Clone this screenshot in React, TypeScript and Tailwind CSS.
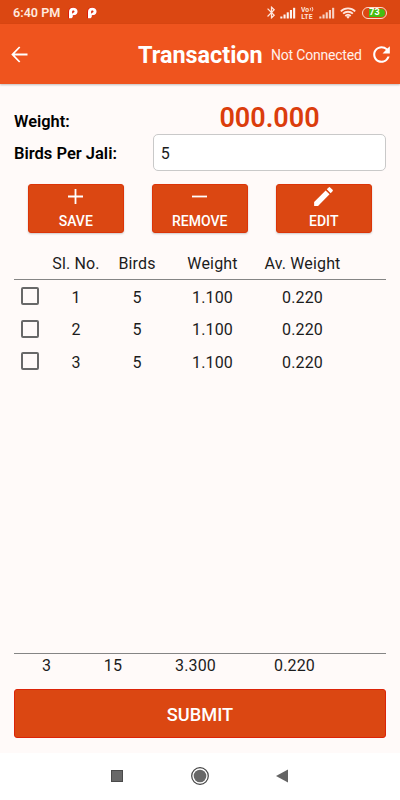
import type { ReactNode } from 'react';
import { MdBluetooth, MdEdit, MdRefresh } from 'react-icons/md';

const rows = [
  { id: 1, birds: 5, weight: '1.100', average: '0.220' },
  { id: 2, birds: 5, weight: '1.100', average: '0.220' },
  { id: 3, birds: 5, weight: '1.100', average: '0.220' },
];

function ParkingGlyph() {
  return (
    <svg width="10" height="12" viewBox="0 0 10 12">
      <path d="M.4 11.3V4.8C.4 2 2.1.5 5 .5c2.8 0 4.6 1.6 4.6 4S8 8.6 5.2 8.7v.7l-1.6 1.9Z" fill="#e00000" />
      <path d="M1 11.3V4.9C1 2.2 2.5.8 5.2.8 7.9.8 9.6 2.2 9.6 4.5S8 8.3 5.4 8.3H4.8v1.6l-1.2 1.4Z" fill="#fff" />
      <path d="M4.1 6.7V4.8c0-.8.5-1.2 1.2-1.2s1.2.4 1.2 1-.5 1.1-1.2 1.1Z" fill="#db2d10" />
    </svg>
  );
}

function Signal({ dim = false }: { dim?: boolean }) {
  return (
    <svg width="16" height="12" viewBox="0 0 16 12" fill="#fff" opacity={dim ? 0.75 : 0.95}>
      <rect x="0.3" y="9.5" width="2.1" height="2" />
      <rect x="3.5" y="7.5" width="2.1" height="4" />
      <rect x="6.7" y="5.3" width="2.1" height="6.2" />
      <rect x="9.9" y="3" width="2.1" height="8.5" />
      <rect x="13.1" y="0.8" width="2.1" height="10.7" />
    </svg>
  );
}

function Wifi() {
  return (
    <svg width="16" height="12" viewBox="0 0 16 12" fill="none" stroke="#ffe5dc" strokeWidth="1.8">
      <path d="M.8 4.3a10.4 10.4 0 0 1 14.4 0M3.1 6.7a7.1 7.1 0 0 1 9.8 0M5.3 9a4 4 0 0 1 5.4 0" />
      <path d="M6.2 9.7 8 11.7l1.8-2a2.7 2.7 0 0 0-3.6 0Z" fill="#ffe5dc" stroke="none" />
    </svg>
  );
}

function StatusBar() {
  return (
    <div className="flex h-6 shrink-0 items-center bg-[#db4712] pl-[13px] pr-[13px] text-white">
      <span className="w-[55px] whitespace-nowrap pt-[3px] text-[12.6px] font-semibold leading-none text-[#ffe9df]">
        6:40 PM
      </span>
      <div className="flex gap-[9px] pt-0.5">
        <ParkingGlyph />
        <ParkingGlyph />
      </div>
      <div className="ml-auto flex items-center pt-px">
        <MdBluetooth size={15} className="mr-px text-[#ffe5dc]" />
        <Signal />
        <svg width="13" height="13" viewBox="0 0 13 13" className="ml-[5px] mr-[5px]" fill="#ffe5dc">
          <text x="0" y="5.5" fontSize="6.8" fontWeight="700">Vo</text>
          <path d="M9.2 1.8q1 1.4 0 2.8M11 1q1.8 2.2 0 4.4" fill="none" stroke="#ffe5dc" strokeWidth="0.9" />
          <text x="0.2" y="12.5" fontSize="6.8" fontWeight="700" letterSpacing="0.2">LTE</text>
        </svg>
        <Signal dim />
        <div className="ml-[5px] mr-[6px]">
          <Wifi />
        </div>
        <div className="flex h-3 w-[25px] rounded-full border border-[#ffd9cc] p-px">
          <div className="flex h-2 w-full items-center justify-center rounded-full bg-[linear-gradient(90deg,#db4712_25%,#45bd12_25%)] text-[9px] font-bold leading-none">
            73
          </div>
        </div>
      </div>
    </div>
  );
}

function ActionButton({ icon, label }: { icon: ReactNode; label: string }) {
  return (
    <button className="flex h-[49px] w-[96.5px] flex-col items-center rounded-[3px] border border-[#dc3408] bg-[#db4712] text-white shadow-[0_1px_2px_rgba(0,0,0,0.2)]">
      <span className="flex h-[23px] shrink-0 items-center">{icon}</span>
      <span className="mt-0.5 shrink-0 text-[14px] font-medium leading-[23px]">{label}</span>
    </button>
  );
}

export default function App() {
  return (
    <div className="flex h-[800px] w-[400px] flex-col overflow-hidden bg-[#fffaf9] font-['Roboto',sans-serif] text-[#1c1c1c]">
      <StatusBar />
      <header className="flex h-[60px] shrink-0 items-center bg-[#ef541e] pl-[11px] pr-[6px] pt-px text-white shadow-[0_1px_2px_rgba(0,0,0,0.25)]">
        <svg width="17" height="17" viewBox="0 0 17 17" fill="none" stroke="#fff" strokeWidth="1.8">
          <path d="M8.7 1 1.5 8.5 8.7 16M1.3 8.5h15.2" />
        </svg>
        <h1 className="ml-[110px] w-[133px] whitespace-nowrap pt-[3px] text-[23.4px] font-bold leading-none">
          Transaction
        </h1>
        <span className="whitespace-nowrap pt-px text-[14px] leading-none tracking-[-0.2px] text-[#fff1eb]">
          Not Connected
        </span>
        <MdRefresh size={25} className="ml-auto" />
      </header>

      <main className="flex h-[669px] shrink-0 flex-col px-[14px]">
        <div className="mt-[18px] flex h-8 items-center">
          <span className="w-[139px] pt-[9px] text-[16.4px] font-semibold leading-none text-black">Weight:</span>
          <span className="w-[233px] pt-px text-center text-[27px] font-semibold leading-none text-[#db3d0c]">
            000.000
          </span>
        </div>
        <div className="flex h-[37px] items-center">
          <label className="w-[139px] whitespace-nowrap pt-[3px] text-[16.5px] font-semibold leading-none text-black">
            Birds Per Jali:
          </label>
          <div className="flex h-[37px] w-[234px] items-center rounded-[5px] border border-[#c9c9c9] bg-white pl-[7px] pt-0.5 text-[16px]">
            5
          </div>
        </div>

        <div className="mt-[13px] flex gap-[27.5px] pl-[13.5px]">
          <ActionButton
            icon={
              <svg width="15" height="15" stroke="#fff" strokeWidth="1.8">
                <path d="M0 7.5h15M7.5 0v15" />
              </svg>
            }
            label="SAVE"
          />
          <ActionButton
            icon={
              <svg width="15" height="15" stroke="#fff" strokeWidth="1.8">
                <path d="M0 7.5h15" />
              </svg>
            }
            label="REMOVE"
          />
          <ActionButton icon={<MdEdit size={25} />} label="EDIT" />
        </div>

        <div className="mt-[13px] grid h-[34px] grid-cols-[32px_60px_62px_89px_91px] items-center whitespace-nowrap border-b border-[#858585] pt-0.5 text-center text-[16px] tracking-[0.15px]">
          <span />
          <span>Sl. No.</span>
          <span>Birds</span>
          <span>Weight</span>
          <span>Av. Weight</span>
        </div>
        <div className="flex-1">
          {rows.map((row) => (
            <div
              key={row.id}
              className="grid h-[32.5px] grid-cols-[32px_60px_62px_89px_91px] items-center text-center text-[16px] leading-6 tracking-[0.15px]"
            >
              <span className="ml-[7px] size-[18px] rounded-[2px] border-2 border-[#686868]" />
              <span className="pt-[3px]">{row.id}</span>
              <span className="pt-[3px]">{row.birds}</span>
              <span className="pt-[3px]">{row.weight}</span>
              <span className="pt-[3px]">{row.average}</span>
            </div>
          ))}
        </div>

        <div className="grid h-[36px] grid-cols-[65px_68px_97px_101px] border-t border-[#858585] text-center text-[16px] leading-[24px] tracking-[0.15px]">
          <span>3</span>
          <span>15</span>
          <span>3.300</span>
          <span>0.220</span>
        </div>
        <button className="mb-[15px] h-[49px] shrink-0 rounded-[3px] border border-[#dc2408] bg-[#db4712] pt-0.5 text-[18.2px] font-medium text-white">
          SUBMIT
        </button>
      </main>

      <nav className="flex flex-1 items-center bg-white pb-0.5 pl-[111px]">
        <svg width="12" height="12">
          <rect x="0.5" y="0.5" width="11" height="11" fill="#686868" stroke="#4a4a4a" />
        </svg>
        <svg width="18" height="18" className="ml-[68px]">
          <circle cx="9" cy="9" r="8.3" fill="#fff" stroke="#444" strokeWidth="1.2" />
          <circle cx="9" cy="9" r="6.3" fill="#686868" />
        </svg>
        <svg width="12" height="14" className="ml-[67px]">
          <path d="M0 7 12 0.4v13.2Z" fill="#646464" />
        </svg>
      </nav>
    </div>
  );
}
